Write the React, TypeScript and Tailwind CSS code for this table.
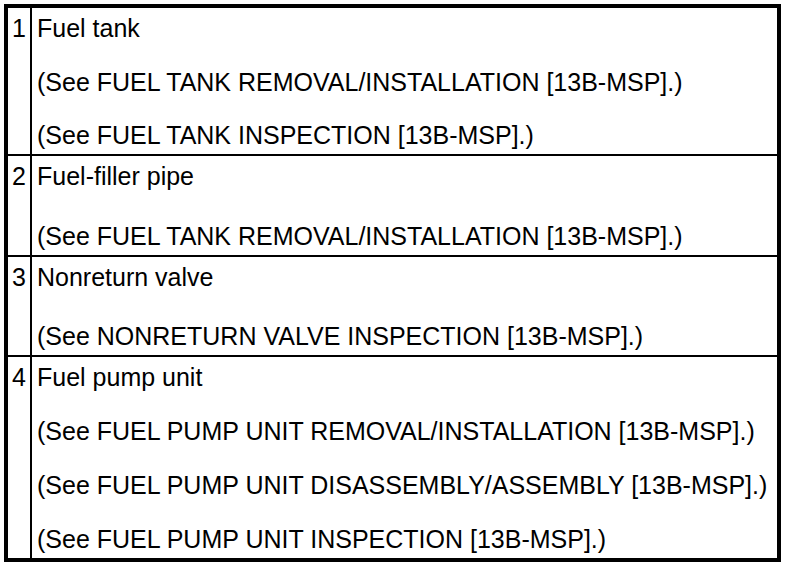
import React from 'react';

type Item = {
    num: string;
    title: string;
    refs: string[];
    height: string;
};

// rows of the parts list, heights taken from the printed table (divider included)
const items: Item[] = [
    {
        num: "1",
        title: "Fuel tank",
        refs: [
            "(See FUEL TANK REMOVAL/INSTALLATION [13B-MSP].)",
            "(See FUEL TANK INSPECTION [13B-MSP].)",
        ],
        height: "h-[148px]",
    },
    {
        num: "2",
        title: "Fuel-filler pipe",
        refs: ["(See FUEL TANK REMOVAL/INSTALLATION [13B-MSP].)"],
        height: "h-[101px]",
    },
    {
        num: "3",
        title: "Nonreturn valve",
        refs: ["(See NONRETURN VALVE INSPECTION [13B-MSP].)"],
        height: "h-[100px]",
    },
    {
        num: "4",
        title: "Fuel pump unit",
        refs: [
            "(See FUEL PUMP UNIT REMOVAL/INSTALLATION [13B-MSP].)",
            "(See FUEL PUMP UNIT DISASSEMBLY/ASSEMBLY [13B-MSP].)",
            "(See FUEL PUMP UNIT INSPECTION [13B-MSP].)",
        ],
        height: "h-[201px]",
    },
];

const PartRow: React.FC<{ item: Item; last: boolean }> = ({ item, last }) => {
    return (
        <div className={`flex shrink-0 ${item.height} ${last ? "" : "border-b-2 border-black"}`}>
            <div className="w-[24px] shrink-0 border-r-2 border-black pt-[6px] text-center leading-[28px]">
                {item.num}
            </div>
            <div className="flex flex-1 flex-col justify-between pl-[5px] pt-[6px] pb-[5px] leading-[28px]">
                <p>{item.title}</p>
                {item.refs.map((r) => (
                    <p key={r}>{r}</p>
                ))}
            </div>
        </div>
    );
};

export default function App() {
    return (
        <div className="w-[800px] h-[568px] bg-white p-[4px] text-black text-[25px] font-['Liberation_Sans',Arial,sans-serif]">
            <div className="w-[777px] h-[558px] border-4 border-black flex flex-col">
                {items.map((it, i) => (
                    <PartRow key={it.num} item={it} last={i === items.length - 1} />
                ))}
            </div>
        </div>
    );
}
